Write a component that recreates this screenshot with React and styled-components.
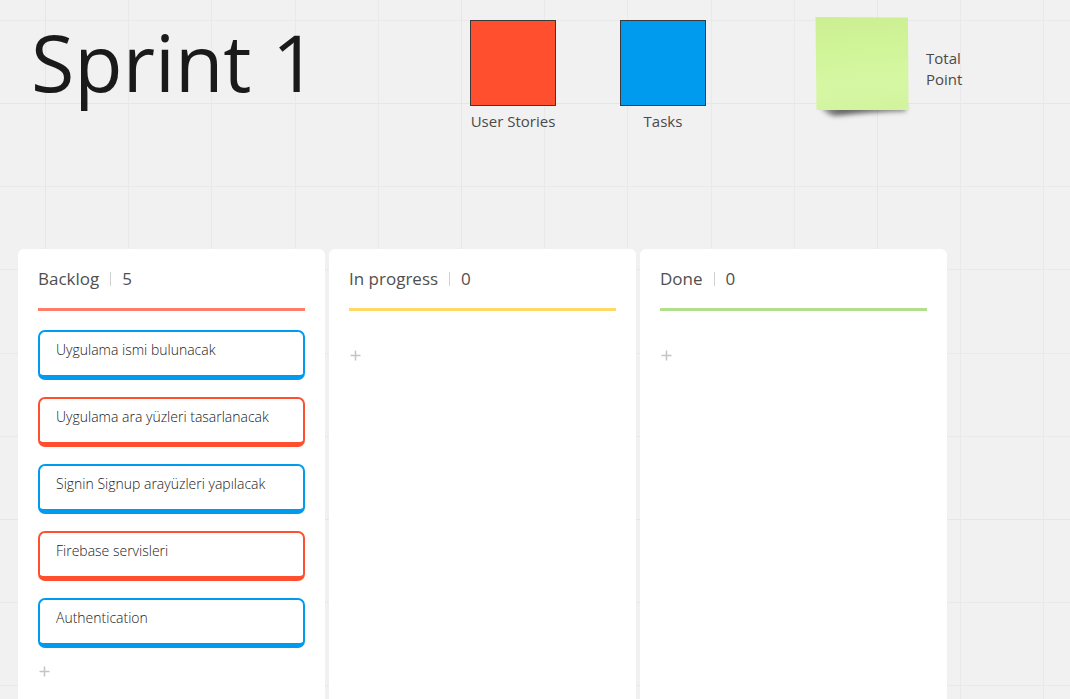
import React from "react";
import styled, { createGlobalStyle } from "styled-components";

const GlobalStyle = createGlobalStyle`
  *, *::before, *::after { box-sizing: border-box; }
  body {
    margin: 0;
    background: #f1f1f1;
    color: #1a1a1a;
    font-family: "Open Sans", "Noto Sans", sans-serif;
  }
`;

const gridLines = (direction) => `
  linear-gradient(${direction}, #e6e6e6 1px, transparent 1px, transparent 83px,
    #e9e9e9 83px, #e9e9e9 84px, transparent 84px, transparent 166px,
    #e9e9e9 166px, #e9e9e9 167px, transparent 167px, transparent 250px,
    #e9e9e9 250px, #e9e9e9 251px, transparent 251px, transparent 333px,
    #e9e9e9 333px, #e9e9e9 334px, transparent 334px)`;

const Canvas = styled.main`
  display: flex;
  flex-direction: column;
  min-height: 100vh;
  background-image: ${gridLines("to right")}, ${gridLines("to bottom")};
  background-size: 416px 416px;
  background-position: 45px 103px;
`;

const Header = styled.header`
  display: grid;
  grid-template-columns: minmax(auto, 439px) 150px 188px 1fr;
  align-items: start;
  min-height: 249px;
  padding: 8px 0 0 31px;
`;

const Title = styled.h1`
  margin: 0;
  font-size: 79px;
  line-height: 108px;
  font-weight: 400;
  white-space: nowrap;
`;

const Legend = styled.figure`
  width: 86px;
  margin: 12px 0 0;
  text-align: center;
`;

const Swatch = styled.div`
  height: 86px;
  border: 1px solid #3a3a3a;
  background: ${(p) => p.$color};
`;

const Caption = styled.figcaption`
  margin-top: ${(p) => (p.$beside ? "0" : "5px")};
  color: #4a4a4a;
  font-size: 15px;
  line-height: 21px;
  white-space: nowrap;
`;

const NoteLegend = styled.figure`
  display: flex;
  gap: 10px;
  margin: 0;
  padding-top: 4px;

  figcaption {
    padding-top: 36px;
  }
`;

const Board = styled.div`
  display: grid;
  flex: 1;
  grid-template-columns: repeat(3, minmax(0, 307px));
  gap: 4px;
  padding: 0 18px;
`;

const Column = styled.section`
  padding: 20px 20px 0;
  border-radius: 6px 6px 0 0;
  background: #fff;
`;

const ColumnHeader = styled.div`
  display: flex;
  align-items: center;
  gap: 11px;
  height: 42px;
  padding-bottom: 19px;
  border-bottom: 3px solid ${(p) => p.$color};
  color: #4f4f4f;
  font-size: 17px;
  line-height: 20px;
`;

const ColumnTitle = styled.h2`
  margin: 0;
  font: inherit;
`;

const Divider = styled.span`
  width: 1px;
  height: 14px;
  background: #d2d2d2;
`;

const CardList = styled.ul`
  display: flex;
  flex-direction: column;
  gap: 17px;
  margin: 19px 0 0;
  padding: 0;
  list-style: none;
`;

const Card = styled.li`
  height: 50px;
  padding: 8px 16px;
  border: 2px solid ${(p) => p.$color};
  border-bottom-width: 5px;
  border-radius: 7px;
  color: #1a1a1a;
  font-size: 14px;
  font-weight: 300;
  line-height: 20px;
`;

const AddButton = styled.button`
  display: block;
  margin: ${(p) => (p.$empty ? "36px" : "15px")} 0 0;
  padding: 3px 1px;
  border: 0;
  background: none;
  cursor: pointer;

  svg {
    display: block;
  }
`;

const BLUE = "#009bef";
const RED = "#ff4f2e";

const columns = [
  {
    title: "Backlog",
    count: 5,
    color: "#ff7d69",
    cards: [
      { text: "Uygulama ismi bulunacak", color: BLUE },
      { text: "Uygulama ara yüzleri tasarlanacak", color: RED },
      { text: "Signin Signup arayüzleri yapılacak", color: BLUE },
      { text: "Firebase servisleri", color: RED },
      { text: "Authentication", color: BLUE },
    ],
  },
  { title: "In progress", count: 0, color: "#ffd866", cards: [] },
  { title: "Done", count: 0, color: "#b2df8e", cards: [] },
];

function StickyNote() {
  return (
    <svg width="108" height="112" viewBox="0 0 108 112" aria-hidden="true">
      <defs>
        <linearGradient id="paper" x1="0.4" y1="0" x2="0.5" y2="1">
          <stop offset="0" stopColor="#cdef94" />
          <stop offset="0.35" stopColor="#d0f498" />
          <stop offset="0.7" stopColor="#d5f7a3" />
          <stop offset="1" stopColor="#d3f49f" />
        </linearGradient>
        <linearGradient id="shade" x1="0" x2="1">
          <stop offset="0" stopColor="#000" stopOpacity="0.35" />
          <stop offset="0.25" stopColor="#000" stopOpacity="0.6" />
          <stop offset="1" stopColor="#000" stopOpacity="0.5" />
        </linearGradient>
        <filter id="soft" x="-20%" y="-50%" width="140%" height="200%">
          <feGaussianBlur stdDeviation="2.5" />
        </filter>
      </defs>
      <path d="M12 94 L98 94 L98 99 Q60 100 26 104 Q18 102 12 94Z" fill="url(#shade)" filter="url(#soft)" />
      <path d="M7.5 5 L100 5.500 L100.500 98 L8.500 98 Z" fill="url(#paper)" />
    </svg>
  );
}

function PlusIcon() {
  return (
    <svg width="11" height="11" viewBox="0 0 11 11" aria-hidden="true">
      <path d="M5.500 0.500V10.500M0.500 5.500H10.500" stroke="#c4c4c4" strokeWidth="1.500" />
    </svg>
  );
}

export default function App() {
  return (
    <>
      <GlobalStyle />
      <Canvas>
        <Header>
          <Title>Sprint 1</Title>
          <Legend>
            <Swatch $color={RED} />
            <Caption>User Stories</Caption>
          </Legend>
          <Legend>
            <Swatch $color={BLUE} />
            <Caption>Tasks</Caption>
          </Legend>
          <NoteLegend>
            <StickyNote />
            <Caption $beside>
              Total
              <br />
              Point
            </Caption>
          </NoteLegend>
        </Header>
        <Board>
          {columns.map((column) => (
            <Column key={column.title}>
              <ColumnHeader $color={column.color}>
                <ColumnTitle>{column.title}</ColumnTitle>
                <Divider />
                <span>{column.count}</span>
              </ColumnHeader>
              {column.cards.length > 0 && (
                <CardList>
                  {column.cards.map((card) => (
                    <Card key={card.text} $color={card.color}>
                      {card.text}
                    </Card>
                  ))}
                </CardList>
              )}
              <AddButton
                type="button"
                $empty={column.cards.length === 0}
                aria-label={`Add card to ${column.title}`}
              >
                <PlusIcon />
              </AddButton>
            </Column>
          ))}
        </Board>
      </Canvas>
    </>
  );
}
